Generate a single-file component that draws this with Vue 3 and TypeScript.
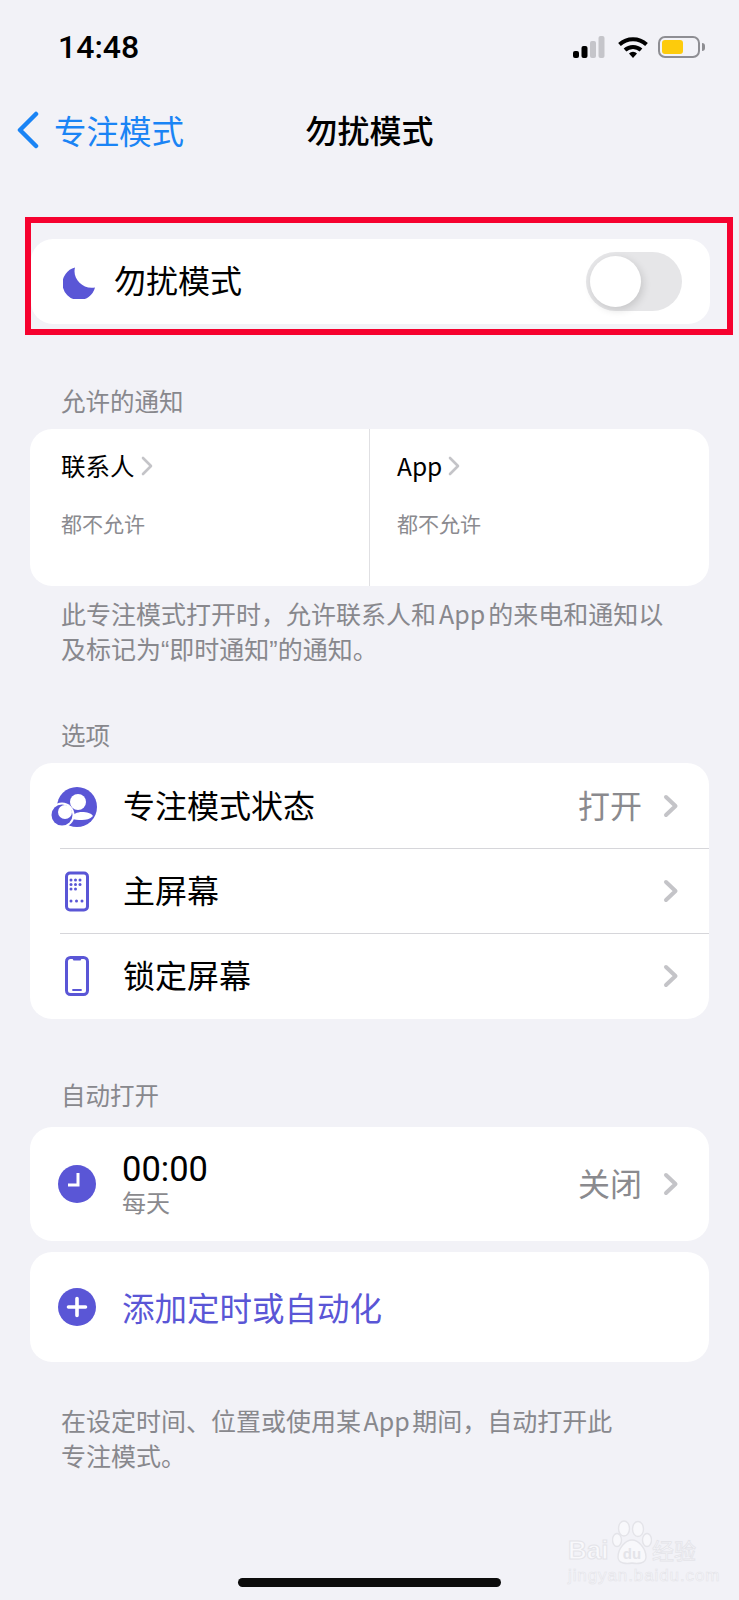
<script setup lang="ts">
interface OptionRow {
  label: string;
  value?: string;
  icon: string;
}

const optionRows: OptionRow[] = [
  { label: '专注模式状态', value: '打开', icon: 'status' },
  { label: '主屏幕', icon: 'home' },
  { label: '锁定屏幕', icon: 'lock' },
];

const gridDots: [number, number][] = [
  [26, 21], [30.5, 21], [35, 21],
  [26, 25.5], [30.5, 25.5], [35, 25.5],
  [26, 30], [30.5, 30],
  [26, 42], [31.5, 42], [37, 42],
];

const allowCells = [{ label: '联系人' }, { label: 'App' }];
</script>

<template>
  <div class="page">
    <header class="status-bar">
      <span class="time">14:48</span>
      <div class="status-icons">
        <svg class="signal" width="33" height="24" viewBox="0 0 33 24">
          <rect x="0" y="16" width="6" height="7" rx="2" fill="#000" />
          <rect x="8.5" y="11" width="6" height="12" rx="2" fill="#000" />
          <rect x="17" y="6" width="6" height="17" rx="2" fill="#c5c5ca" />
          <rect x="25.5" y="1" width="6" height="22" rx="2" fill="#c5c5ca" />
        </svg>
        <svg class="wifi" width="32" height="24" viewBox="0 0 32 24">
          <path d="M2.5 9.5a20 20 0 0 1 27 0" fill="none" stroke="#000" stroke-width="4" stroke-linecap="butt" />
          <path d="M8 15a12 12 0 0 1 16 0" fill="none" stroke="#000" stroke-width="4" />
          <path d="M12 18.5a5.5 5.5 0 0 1 8 0L16 23z" fill="#000" />
        </svg>
        <div class="battery">
          <div class="battery-body"><div class="battery-level"></div></div>
          <div class="battery-nub"></div>
        </div>
      </div>
    </header>

    <nav class="nav-bar">
      <div class="nav-back">
        <svg width="24" height="38" viewBox="0 0 24 38">
          <path d="M20 3L4 19l16 16" fill="none" stroke="#1a84f5" stroke-width="4.5" stroke-linecap="round" stroke-linejoin="round" />
        </svg>
        <span>专注模式</span>
      </div>
      <h1 class="nav-title">勿扰模式</h1>
    </nav>

    <div class="highlight">
      <div class="card main-toggle">
        <svg class="moon" width="34" height="34" viewBox="0 0 34 34">
          <path d="M12 2.5A16.5 16.5 0 1 0 32 22.5C20 25 9 14 12 2.5z" fill="#5a56d6" />
        </svg>
        <span class="row-label">勿扰模式</span>
        <div class="toggle"><div class="toggle-knob"></div></div>
      </div>
    </div>

    <p class="section-label first">允许的通知</p>
    <div class="card allow-card">
      <div v-for="cell in allowCells" :key="cell.label" class="allow-cell">
        <div class="allow-title">
          {{ cell.label }}
          <svg width="13" height="20" viewBox="0 0 13 20">
            <path d="M2 2l8 8-8 8" fill="none" stroke="#c4c4c8" stroke-width="2.6" stroke-linecap="round" stroke-linejoin="round" />
          </svg>
        </div>
        <div class="allow-value">都不允许</div>
      </div>
    </div>
    <p class="section-note">此专注模式打开时，允许联系人和<span class="app-word">App</span>的来电和通知以<br />及标记为<span class="quote">“</span>即时通知<span class="quote">”</span>的通知。</p>

    <p class="section-label options">选项</p>
    <div class="card">
      <div v-for="row in optionRows" :key="row.label" class="option-row">
        <div class="leading">
          <svg width="64" height="64" viewBox="0 0 64 64">
            <template v-if="row.icon === 'status'">
              <circle cx="32" cy="33" r="20" fill="#5a56d6" />
              <circle cx="33" cy="28" r="8" fill="#fff" />
              <path d="M26 44c2-4 6-6 11-6 5 0 9 1 11 4-3 3-7 4-11 4-4 0-8 0-11-2z" fill="#fff" />
              <circle cx="17" cy="41" r="12.5" fill="#fff" />
              <circle cx="17" cy="41" r="10.5" fill="#5a56d6" />
              <circle cx="20" cy="38" r="7" fill="#fff" />
            </template>
            <template v-else-if="row.icon === 'home'">
              <rect x="21.5" y="14" width="21" height="37" rx="3.5" fill="none" stroke="#5a56d6" stroke-width="3" />
              <circle v-for="dot in gridDots" :key="dot.join()" :cx="dot[0]" :cy="dot[1]" r="1.5" fill="#5a56d6" />
            </template>
            <template v-else>
              <rect x="21.5" y="13.5" width="21" height="37" rx="4" fill="none" stroke="#5a56d6" stroke-width="3" />
              <path d="M27 14h10l-1.5 2.5h-7z" fill="#5a56d6" />
              <path d="M28 46h8" stroke="#5a56d6" stroke-width="1.8" stroke-linecap="round" />
            </template>
          </svg>
        </div>
        <div class="row-body">
          <span class="row-label">{{ row.label }}</span>
          <span v-if="row.value" class="row-value">{{ row.value }}</span>
          <svg class="row-chevron" width="17" height="28" viewBox="0 0 17 28">
            <path d="M4 5l9.5 9L4 23" fill="none" stroke="#c4c4c8" stroke-width="4" stroke-linecap="round" stroke-linejoin="round" />
          </svg>
        </div>
      </div>
    </div>

    <p class="section-label auto">自动打开</p>
    <div class="card schedule-row">
      <div class="leading">
        <svg width="64" height="64" viewBox="0 0 64 64">
          <circle cx="32" cy="32" r="19" fill="#5a56d6" />
          <path d="M33 21v12H23" fill="none" stroke="#fff" stroke-width="3" />
        </svg>
      </div>
      <div class="schedule-text">
        <span class="schedule-time">00:00</span>
        <span class="schedule-days">每天</span>
      </div>
      <span class="row-value">关闭</span>
      <svg class="row-chevron" width="17" height="28" viewBox="0 0 17 28">
        <path d="M4 5l9.5 9L4 23" fill="none" stroke="#c4c4c8" stroke-width="4" stroke-linecap="round" stroke-linejoin="round" />
      </svg>
    </div>

    <div class="card add-row">
      <div class="leading">
        <svg width="64" height="64" viewBox="0 0 64 64">
          <circle cx="32" cy="32" r="19" fill="#5a56d6" />
          <path d="M32 23.5v17M23.5 32h17" fill="none" stroke="#fff" stroke-width="3.6" stroke-linecap="round" />
        </svg>
      </div>
      <span class="add-label">添加定时或自动化</span>
    </div>
    <p class="section-note bottom">在设定时间、位置或使用某<span class="app-word">App</span>期间，自动打开此<br />专注模式。</p>

    <div class="home-indicator"></div>

    <div class="watermark">
      <div class="wm-top">
        <span class="wm-bai">Bai</span>
        <svg width="40" height="46" viewBox="0 0 40 46">
          <g fill="#f8f8fb" stroke="#e4e4e9" stroke-width="1.4">
            <ellipse cx="12" cy="8.5" rx="5.5" ry="7.5" />
            <ellipse cx="26" cy="9" rx="5.5" ry="7.5" />
            <ellipse cx="35" cy="20" rx="4.5" ry="6.5" />
            <ellipse cx="5" cy="20" rx="4.5" ry="6.5" />
            <path d="M20 20c7 0 14 9 14 17 0 7-9 7-14 6-5 1-14 1-14-6 0-8 7-17 14-17z" />
          </g>
          <text x="20" y="39" text-anchor="middle" class="wm-du">du</text>
        </svg>
        <span class="wm-cn">经验</span>
      </div>
      <div class="wm-url">jingyan.baidu.com</div>
    </div>
  </div>
</template>

<style scoped>
.page {
  position: relative;
  width: 739px;
  height: 1600px;
  overflow: hidden;
  display: flex;
  flex-direction: column;
  background: #f2f2f7;
  color: #000;
  font-family: "Noto Sans CJK SC", "Liberation Sans", sans-serif;
}

.status-bar {
  height: 94px;
  flex: none;
  display: flex;
  align-items: center;
  justify-content: space-between;
  padding: 0 34px 0 58px;
  box-sizing: border-box;
}

.time {
  font-family: Roboto, "Liberation Sans", sans-serif;
  font-size: 32px;
  font-weight: 500;
  line-height: 1;
}

.status-icons {
  display: flex;
  align-items: center;
}

.signal {
  margin-right: 1px;
}

.wifi {
  margin-left: 10px;
}

.battery {
  display: flex;
  align-items: center;
  margin-left: 9px;
}

.battery-body {
  width: 42px;
  height: 22px;
  box-sizing: border-box;
  border: 2px solid #8e8e93;
  border-radius: 7px;
  padding: 2px;
  display: flex;
}

.battery-level {
  width: 21px;
  background: #fdcb0c;
  border-radius: 3px;
}

.battery-nub {
  width: 3px;
  height: 8px;
  margin-left: 2px;
  background: #8e8e93;
  border-radius: 0 3px 3px 0;
}

.nav-bar {
  position: relative;
  height: 72px;
  flex: none;
  display: flex;
  align-items: center;
  justify-content: center;
}

.nav-back {
  position: absolute;
  left: 16px;
  top: 0;
  height: 100%;
  display: flex;
  align-items: center;
  gap: 14px;
  color: #1a84f5;
  font-size: 32.5px;
}

.nav-back span,
.nav-title {
  padding-bottom: 2px;
}

.nav-title {
  margin: 0;
  font-size: 32px;
  font-weight: 500;
  line-height: 1;
}

.highlight {
  flex: none;
  height: 118px;
  margin: 51px 6px 0 25px;
  box-sizing: border-box;
  border: 6px solid #f6022f;
  padding: 16px 17px 4px 0;
}

.card {
  flex: none;
  margin: 0 30px;
  background: #fff;
  border-radius: 22px;
}

.main-toggle {
  height: 85px;
  margin: 0;
  display: flex;
  align-items: center;
  padding: 0 28px 0 32px;
}

.main-toggle .row-label {
  margin-left: 17px;
  flex: 1;
}

.row-label {
  font-size: 32px;
  line-height: 1.2;
  padding-bottom: 4px;
}

.toggle {
  width: 96px;
  height: 59px;
  box-sizing: border-box;
  padding: 4px;
  border-radius: 30px;
  background: #e6e6e8;
}

.toggle-knob {
  width: 51px;
  height: 51px;
  border-radius: 50%;
  background: #fff;
  box-shadow: 2px 3px 8px rgba(0, 0, 0, 0.14);
}

.section-label {
  margin: 0;
  flex: none;
  padding: 0 0 2px 61px;
  color: #88888d;
  font-size: 24.5px;
  line-height: 32px;
}

.section-label.first {
  margin-top: 50px;
}

.allow-card {
  height: 157px;
  margin-top: 10px;
  display: flex;
}

.allow-cell {
  padding: 18px 0 0 31px;
  box-sizing: border-box;
  width: 339px;
}

.allow-cell + .allow-cell {
  flex: 1;
  border-left: 1px solid #e0e0e3;
  padding-left: 27px;
}

.allow-title {
  display: flex;
  align-items: center;
  gap: 6px;
  height: 38px;
  font-size: 24.5px;
  line-height: 38px;
}

.allow-value {
  margin-top: 21px;
  color: #8b8b90;
  font-size: 21px;
  line-height: 34px;
}

.section-note {
  margin: 0;
  flex: none;
  height: 70px;
  padding-left: 61px;
  color: #88888d;
  font-size: 25px;
  line-height: 35px;
  white-space: nowrap;
}

.quote {
  font-family: "Liberation Sans", sans-serif;
  line-height: 0;
}

.app-word {
  margin: 0 3px;
}

.section-note.bottom .app-word {
  margin: 0 2.5px;
}

.allow-card + .section-note {
  margin-top: 10px;
}

.section-label.options {
  margin-top: 53px;
}

.section-label.options + .card {
  margin-top: 10px;
  height: 256px;
}

.option-row {
  height: 85px;
  display: flex;
}

.leading {
  width: 92px;
  flex: none;
  box-sizing: border-box;
  padding-left: 15px;
  display: flex;
  align-items: center;
}

.option-row .leading {
  width: 93px;
}

.row-body {
  flex: 1;
  display: flex;
  align-items: center;
  margin-left: -63px;
  padding: 0 30px 0 63px;
  border-top: 1px solid transparent;
}

.option-row + .option-row .row-body {
  border-top-color: #d6d6da;
}

.row-body .row-label {
  flex: 1;
}

.row-value {
  color: #8a8a8e;
  font-size: 32px;
  line-height: 1.2;
  margin-right: 20px;
  padding-bottom: 4px;
}

.section-label.auto {
  margin-top: 60px;
}

.schedule-row {
  height: 114px;
  margin-top: 14px;
  display: flex;
  align-items: center;
  padding-right: 30px;
}

.schedule-text {
  flex: 1;
  display: flex;
  flex-direction: column;
}

.schedule-time {
  font-family: Roboto, "Liberation Sans", sans-serif;
  font-size: 34.5px;
  line-height: 36px;
}

.schedule-days {
  color: #8a8a8e;
  font-size: 24px;
  line-height: 30px;
}

.add-row {
  height: 110px;
  margin-top: 11px;
  display: flex;
  align-items: center;
}

.add-label {
  color: #5a56d6;
  font-size: 32.5px;
  line-height: 1.2;
  padding-bottom: 2px;
}

.section-note.bottom {
  margin-top: 41px;
}

.home-indicator {
  flex: none;
  width: 263px;
  height: 9px;
  margin: auto auto 13px;
  border-radius: 5px;
  background: #0c0c0c;
}

.watermark {
  position: absolute;
  left: 568px;
  top: 1520px;
  width: 132px;
}

.wm-top {
  display: flex;
  align-items: flex-end;
  height: 46px;
}

.wm-bai {
  font-family: "Liberation Sans", sans-serif;
  font-size: 26px;
  font-weight: 700;
  line-height: 26px;
  width: 44px;
  margin-bottom: 3px;
  color: #f8f8fb;
  -webkit-text-stroke: 1px #e4e4e9;
}

.wm-du {
  font-family: "Liberation Sans", sans-serif;
  font-size: 15px;
  font-weight: 700;
  fill: #e4e4e9;
}

.wm-cn {
  font-size: 22px;
  line-height: 30px;
  margin-bottom: 2px;
  color: #f8f8fb;
  -webkit-text-stroke: 0.8px #e4e4e9;
}

.wm-url {
  font-family: "Liberation Sans", sans-serif;
  font-size: 17px;
  line-height: 20px;
  letter-spacing: 0.9px;
  color: #f8f8fb;
  -webkit-text-stroke: 0.6px #e4e4e9;
  white-space: nowrap;
}
</style>

<style>
html,
body {
  margin: 0;
  background: #f2f2f7;
}
</style>
